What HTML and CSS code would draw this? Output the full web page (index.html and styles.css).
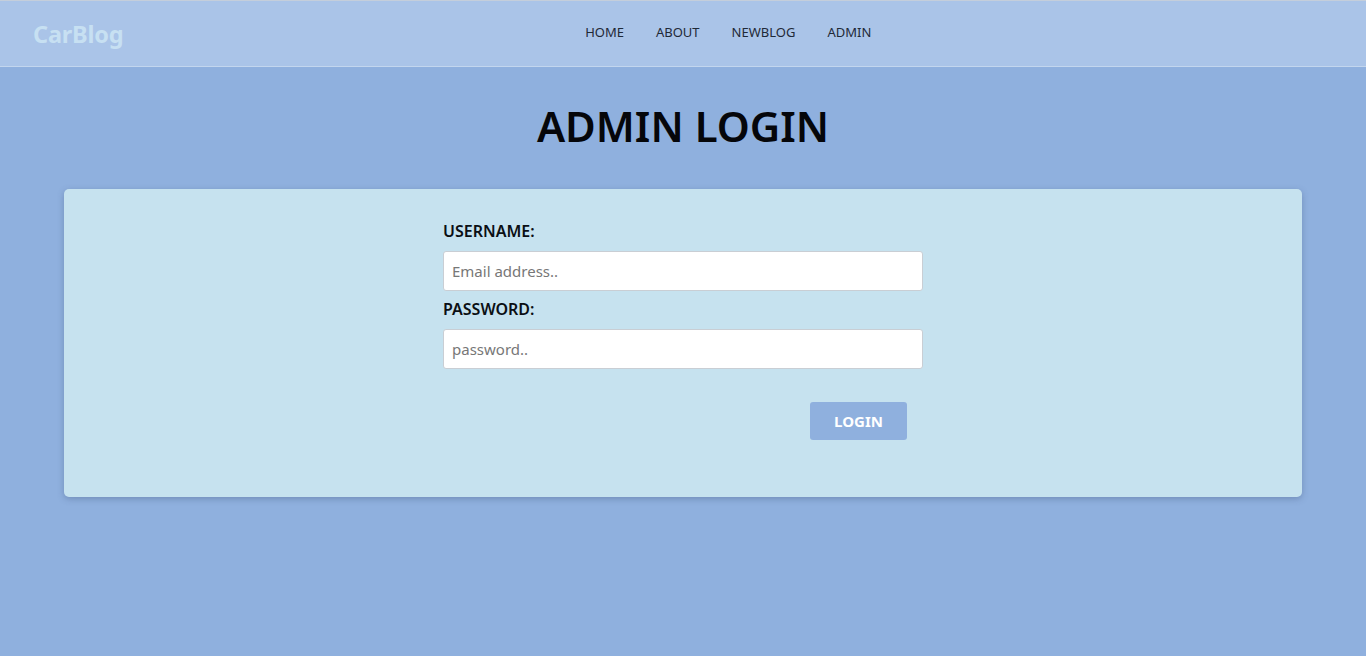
FILE: index.html
```html
<!DOCTYPE html>
<html lang="en">
<head>
<meta charset="utf-8">
<title>CarBlog - Admin Login</title>
<link rel="stylesheet" href="styles.css">
</head>
<body>
<nav class="navbar">
  <a class="brand" href="#">CarBlog</a>
  <ul class="nav-links">
    <li><a href="#">HOME</a></li>
    <li><a href="#">ABOUT</a></li>
    <li><a href="#">NEWBLOG</a></li>
    <li><a href="#">ADMIN</a></li>
  </ul>
</nav>
<main class="page">
  <h1 class="title">ADMIN LOGIN</h1>
  <section class="card">
    <form class="login-form">
      <label class="label" for="user">USERNAME:</label>
      <input class="field" id="user" type="text" placeholder="Email address..">
      <label class="label" for="pass">PASSWORD:</label>
      <input class="field" id="pass" type="password" placeholder="password..">
      <div class="actions">
        <button class="btn" type="button">LOGIN</button>
      </div>
    </form>
  </section>
</main>
</body>
</html>
```
FILE: styles.css
```css
* { box-sizing: border-box; }
html, body {
  margin: 0;
  padding: 0;
}
body {
  background: #8fb0de;
  font-family: "Noto Sans", "Open Sans", sans-serif;
  color: #111;
  min-height: 656px;
}
.navbar {
  height: 67px;
  background: #aac4e8;
  border-top: 1px solid #c4cedb;
  border-bottom: 1px solid #c3d6ee;
  display: flex;
  align-items: center;
  padding: 0 33px;
}
.brand {
  font-size: 23.5px;
  font-weight: 700;
  color: #c7e0f2;
  text-decoration: none;
  letter-spacing: -0.2px;
}
.nav-links {
  flex: 1;
  list-style: none;
  display: flex;
  justify-content: center;
  gap: 32px;
  margin: 0 0 6px;
  padding: 0;
}
.nav-links a {
  font-size: 13px;
  color: #1f2937;
  text-decoration: none;
}
.page {
  padding: 0 64px;
}
.title {
  margin: 0;
  padding-top: 31px;
  height: 122px;
  text-align: center;
  font-size: 42px;
  font-weight: 600;
  color: #05060a;
  line-height: 56px;
}
.card {
  background: #c6e2ef;
  border-radius: 5px;
  box-shadow: 0 2px 6px rgba(60, 80, 120, 0.35);
  height: 308px;
  padding-top: 32px;
  display: flex;
  justify-content: center;
}
.login-form {
  width: 480px;
  display: flex;
  flex-direction: column;
}
.label {
  font-size: 16px;
  font-weight: 600;
  color: #0b0f14;
  line-height: 20px;
  margin-bottom: 10px;
}
.field {
  height: 40px;
  border: 1px solid #c9ced4;
  border-radius: 3px;
  background: #fff;
  padding: 0 8px;
  font-family: inherit;
  font-size: 15px;
  color: #333;
  margin-bottom: 8px;
}
.field::placeholder { color: #777; }
.actions {
  display: flex;
  justify-content: flex-end;
  padding-right: 16px;
  margin-top: 25px;
}
.btn {
  width: 97px;
  height: 38px;
  background: #8fb0de;
  color: #fff;
  border: none;
  border-radius: 3px;
  font-family: inherit;
  font-size: 15px;
  font-weight: 700;
}
```
